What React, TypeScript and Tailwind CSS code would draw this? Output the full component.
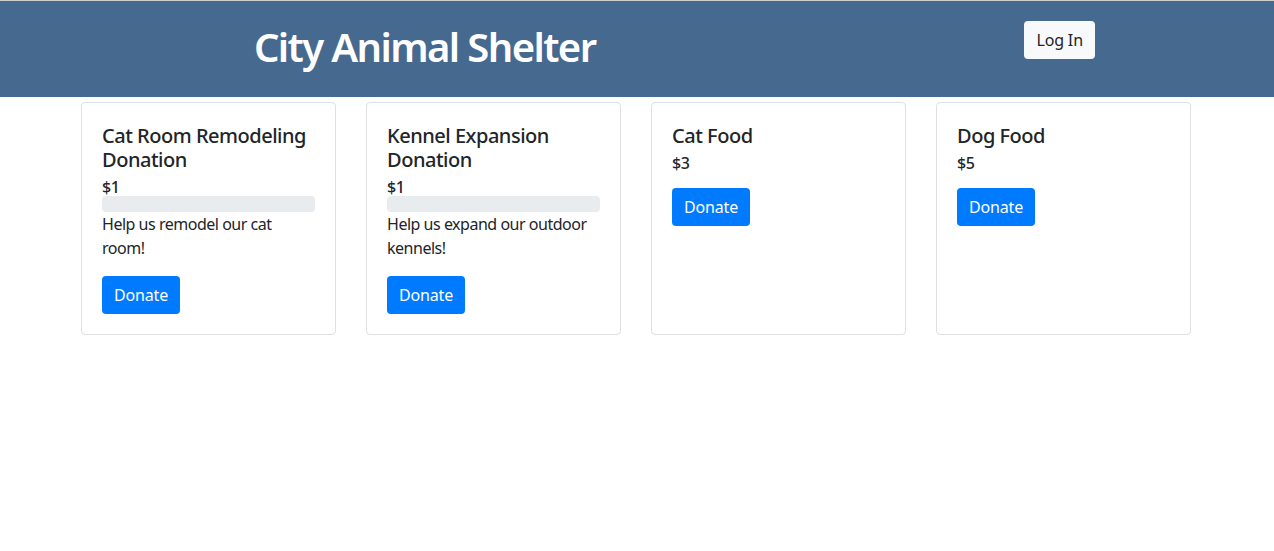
const font = { fontFamily: '"Noto Sans", "Open Sans", sans-serif' }

interface Item {
  title: string
  price: string
  description?: string
  progress?: boolean
}

const items: Item[] = [
  { title: 'Cat Room Remodeling Donation', price: '$1', description: 'Help us remodel our cat room!', progress: true },
  { title: 'Kennel Expansion Donation', price: '$1', description: 'Help us expand our outdoor kennels!', progress: true },
  { title: 'Cat Food', price: '$3' },
  { title: 'Dog Food', price: '$5' },
]

function DonationCard({ item }: { item: Item }) {
  return (
    <div className="border border-[#dfdfdf] rounded-[4px] bg-white px-5 pt-[21px] pb-5 min-h-[233px]">
      <h5 className="text-[20px] leading-[24px] font-medium text-[#212529] mb-[6px]">{item.title}</h5>
      <div className="text-[16px] leading-[18px] font-medium text-[#212529]">{item.price}</div>
      {item.progress ? (
        <>
          <div className="h-4 rounded-[4px] bg-[#e9ecef]" />
          <p className="text-[16px] leading-[24px] text-[#212529] mb-4">{item.description}</p>
        </>
      ) : (
        <div className="mb-4" />
      )}
      <button className="h-[38px] px-3 rounded-[4px] bg-[#007bff] text-white text-[16px] tracking-[-0.01em]">Donate</button>
    </div>
  )
}

export default function App() {
  return (
    <div className="min-h-[551px] bg-white tracking-[-0.03em]" style={font}>
      <header className="border-t border-[#cfcfcf] bg-[#466990] h-[97px] grid grid-cols-3">
        <div className="col-span-2 flex justify-center pt-[22px]">
          <h1 className="text-[40px] leading-[48px] font-semibold text-white tracking-[-0.04em]">City Animal Shelter</h1>
        </div>
        <div className="flex justify-center items-start pt-[20px] pr-[4px]">
          <button className="h-[38px] px-3 rounded-[4px] bg-[#f8f9fa] text-[#212529] text-[16px] tracking-[-0.01em]">Log In</button>
        </div>
      </header>
      <main className="w-[1112px] mx-auto pr-[2px] pt-[5px]">
        <div className="grid grid-cols-4 gap-[30px] items-start">
          {items.map((item) => (
            <DonationCard key={item.title} item={item} />
          ))}
        </div>
      </main>
    </div>
  )
}
